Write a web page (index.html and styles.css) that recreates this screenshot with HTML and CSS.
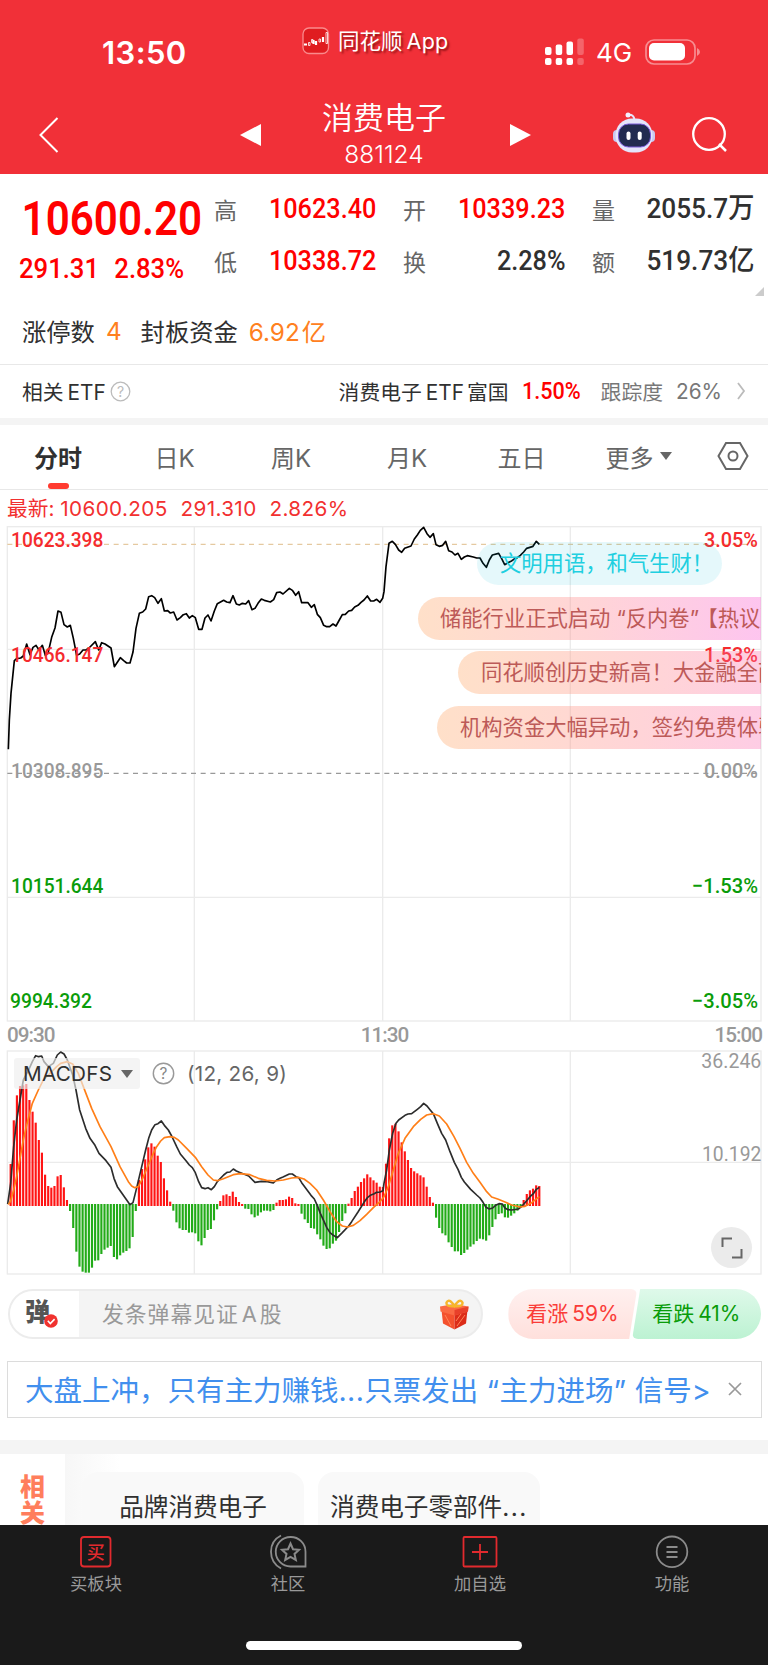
FILE: index.html
```html
<!DOCTYPE html>
<html lang="zh-CN">
  <head>
    <meta charset="UTF-8" />
    <meta name="viewport" content="width=device-width, initial-scale=1.0" />
    <title>消费电子 881124</title>
    <link rel="stylesheet" href="styles.css">
  </head>
  <body>
    <header class="header">
      <div class="status">
        <span class="time">13:50</span>
        <div class="app">
          <svg width="28" height="28" viewBox="0 0 28 28">
            <rect x="1" y="1" width="25.5" height="25.5" rx="6" fill="#e01c20" stroke="#fa8a8c" stroke-width="1.3" />
            <path d="M2 17.500h3M11.500 13v4M14 14v4M21 10v5" stroke="#fff" stroke-width="2.200" fill="none" />
            <path d="M6.500 15.500h1.500v3H6.500zM9.500 12.500h1.500v3H9.500zM17 12h1.500v3H17zM24 5.500h1.500v11H24z" stroke="#fff" stroke-width=".8" fill="none" />
          </svg>
          <span>同花顺<i>App</i></span>
        </div>
        <svg class="signal" width="40" height="28" viewBox="0 0 40 28" fill="#fff">
          <rect x="0" y="9" width="6.500" height="8" rx="2" />
          <rect x="10.700" y="6.500" width="6.500" height="10.500" rx="2" />
          <rect x="21.500" y="3.500" width="6.500" height="13.500" rx="2" />
          <rect x="32.300" y="0.500" width="6.500" height="16.500" rx="2" opacity=".25" />
          <rect x="0" y="20" width="6.500" height="7" rx="2" />
          <rect x="10.700" y="20" width="6.500" height="7" rx="2" />
          <rect x="21.500" y="20" width="6.500" height="7" rx="2" />
          <rect x="32.300" y="20" width="6.500" height="7" rx="2" opacity=".25" />
        </svg>
        <span class="net">4G</span>
        <svg class="battery" width="56" height="26" viewBox="0 0 56 26">
          <rect x="1" y="1" width="49" height="24" rx="8" fill="none" stroke="#fff" stroke-opacity=".45" stroke-width="1.700" />
          <rect x="4" y="4" width="36" height="17.500" rx="5" fill="#fff" />
          <path d="M52 9q3 1.500 3 4t-3 4z" fill="#fff" opacity=".45" />
        </svg>
      </div>
      <div class="nav">
        <svg class="back" width="20" height="38" viewBox="0 0 20 38"><path d="M18.500 2L1.500 19l17 17" fill="none" stroke="#fff" stroke-width="2" /></svg>
        <svg class="prev" width="21" height="22" viewBox="0 0 21 22"><path d="M0 11L21 0v22z" fill="#fff" /></svg>
        <div class="title">
          <h1>消费电子</h1>
          <p>881124</p>
        </div>
        <svg class="next" width="21" height="22" viewBox="0 0 21 22"><path d="M21 11L0 0v22z" fill="#fff" /></svg>
        <svg class="robot" width="44" height="42" viewBox="0 0 44 42">
          <path d="M16 4q6-1 6.500 5" fill="none" stroke="#e6e4fb" stroke-width="2" />
          <circle cx="16" cy="4" r="2.500" fill="#f3f0ff" />
          <rect x="1" y="19" width="10" height="12" rx="4" fill="#c9c8f0" />
          <rect x="33" y="19" width="10" height="12" rx="4" fill="#c9c8f0" />
          <rect x="3.500" y="7.500" width="37" height="34" rx="16.500" fill="#e4e5fb" />
          <rect x="6.500" y="13" width="32" height="23" rx="10" fill="#222b50" stroke="#7a5ad8" stroke-width="1" />
          <rect x="14.500" y="20.500" width="4" height="8.500" rx="2" fill="#fff" />
          <rect x="25.700" y="20.500" width="4" height="8.500" rx="2" fill="#fff" />
        </svg>
        <svg class="search" width="38" height="38" viewBox="0 0 38 38"><circle cx="18" cy="18" r="15.800" fill="none" stroke="#fff" stroke-width="2.300" /><path d="M28 28l7 7" stroke="#fff" stroke-width="2.500" /></svg>
      </div>
    </header>

    <section class="quote">
      <div class="price">
        <strong>10600.20</strong>
        <p><b>291.31</b><b>2.83%</b></p>
      </div>
      <dl class="stats">
        <div><dt>高</dt><dd class="up">10623.40</dd></div>
        <div><dt>开</dt><dd class="up">10339.23</dd></div>
        <div><dt>量</dt><dd class="amount">2055.7万</dd></div>
        <div><dt>低</dt><dd class="up">10338.72</dd></div>
        <div><dt>换</dt><dd>2.28%</dd></div>
        <div><dt>额</dt><dd class="amount">519.73亿</dd></div>
      </dl>
      <i class="corner"></i>
    </section>

    <section class="limit">
      <span>涨停数</span><em>4</em><span>封板资金</span><em>6.92<i>亿</i></em>
    </section>

    <section class="etf">
      <span>相关<i>ETF</i></span>
      <svg class="help" width="21" height="21" viewBox="0 0 21 21"><circle cx="10.500" cy="10.500" r="9.300" fill="none" stroke="#bbb" stroke-width="1.300" /><text x="10.500" y="15.500" text-anchor="middle">?</text></svg>
      <span class="etf-name">消费电子<i>ETF</i>富国</span>
      <b>1.50%</b>
      <span class="track">跟踪度</span>
      <span class="rate">26%</span>
      <svg width="10" height="20" viewBox="0 0 10 20"><path d="M2 2l6 8-6 8" fill="none" stroke="#bbb" stroke-width="1.800" /></svg>
    </section>

    <nav class="tabs">
      <a class="active">分时</a>
      <a>日K</a>
      <a>周K</a>
      <a>月K</a>
      <a>五日</a>
      <a>更多<i class="caret"></i></a>
      <a>
        <svg width="32" height="30" viewBox="0 0 32 30" fill="none" stroke="#666" stroke-width="2"><path d="M9 2h14l7.500 13L23 28H9L1.500 15z" /><circle cx="16" cy="15" r="4.500" /></svg>
      </a>
    </nav>

    <p class="latest"><span>最新:</span><span>10600.205</span><span>291.310</span><span>2.826%</span></p>

    <section class="chart">
      <svg class="plot" width="768" height="496" viewBox="0 318 2304 1488">
        <g class="grid">
          <rect x="22" y="320" width="2261" height="1483" />
          <path d="M583 320v1483M1148 320v1483M1711 320v1483M22 688h2261M22 1432h2261" />
        </g>
        <path class="dash-high" d="M22 373H2283" />
        <path class="dash-zero" d="M22 1060H2283" />
        <polyline class="price-line" points="25,988 28,900 33,820 43,722 50,716 62,714 70,708 80,672 90,704 99,682 108,676 117,690 127,676 136,706 144,700 155,652 165,624 174,573 183,577 192,614 202,621 211,616 220,655 230,706 239,702 249,690 258,690 267,684 286,665 296,690 305,668 315,672 333,684 343,740 361,713 371,722 380,729 390,729 399,696 408,625 418,580 428,576 437,567 446,530 455,527 464,533 474,550 484,536 493,573 503,572 511,579 521,576 531,600 541,593 550,584 559,581 568,594 577,587 586,593 596,628 606,628 615,594 624,585 633,603 643,573 652,551 671,541 680,546 690,548 699,527 709,552 718,555 727,550 737,552 746,542 756,569 765,565 774,550 784,537 793,541 811,546 821,539 830,518 840,516 849,522 868,505 877,511 887,526 896,515 905,548 924,548 934,562 943,554 952,583 961,593 971,616 980,620 989,620 999,612 1008,618 1018,600 1027,584 1036,583 1046,573 1055,571 1064,561 1074,556 1083,547 1092,540 1102,528 1112,543 1121,543 1130,538 1140,547 1148,535 1152,515 1158,440 1167,370 1177,364 1186,373 1196,390 1205,397 1214,385 1233,378 1243,357 1252,345 1261,331 1271,322 1281,341 1290,352 1300,341 1308,374 1318,379 1328,376 1337,364 1346,392 1356,396 1365,405 1374,400 1384,418 1393,411 1402,407 1420,411 1430,414 1440,414 1449,430 1459,442 1468,420 1477,405 1496,400 1505,416 1514,434 1524,428 1533,424 1543,417 1552,413 1561,406 1571,396 1580,385 1599,379 1609,364 1618,373" />
        <g class="scale">
          <text class="rise" x="33" y="380" textLength="277" lengthAdjust="spacingAndGlyphs">10623.398</text>
          <text class="rise" x="33" y="726" textLength="277" lengthAdjust="spacingAndGlyphs">10466.147</text>
          <text x="33" y="1073" textLength="277" lengthAdjust="spacingAndGlyphs">10308.895</text>
          <text class="fall" x="33" y="1419" textLength="277" lengthAdjust="spacingAndGlyphs">10151.644</text>
          <text class="fall" x="30" y="1765" textLength="246" lengthAdjust="spacingAndGlyphs">9994.392</text>
          <text class="rise" x="2112" y="380" textLength="162" lengthAdjust="spacingAndGlyphs">3.05%</text>
          <text class="rise" x="2112" y="726" textLength="162" lengthAdjust="spacingAndGlyphs">1.53%</text>
          <text x="2112" y="1073" textLength="162" lengthAdjust="spacingAndGlyphs">0.00%</text>
          <text class="fall" x="2076" y="1419" textLength="198" lengthAdjust="spacingAndGlyphs">−1.53%</text>
          <text class="fall" x="2076" y="1765" textLength="198" lengthAdjust="spacingAndGlyphs">−3.05%</text>
        </g>
      </svg>
      <div class="barrage">
        <p class="notice">文明用语，和气生财！</p>
        <p class="hot first">储能行业正式启动<i> “</i>反内卷<i class="close">”</i>【热议】</p>
        <p class="hot second">同花顺创历史新高！大金融全面爆发</p>
        <p class="hot third">机构资金大幅异动，签约免费体验</p>
      </div>
    </section>

    <div class="times"><span>09:30</span><span>11:30</span><span>15:00</span></div>

    <section class="macd">
      <svg class="plot" width="768" height="225" viewBox="0 150 2304 675">
        <g class="grid">
          <rect x="22" y="153" width="2261" height="669" />
          <path d="M583 153v669M1148 153v669M1711 153v669M22 487h2261" />
        </g>
        <g id="bars"></g>
        <polyline class="dif" points="23,612 32,550 41,440 50,360 60,300 70,240 88,205 97,185 107,167 116,170 125,168 132,185 145,200 160,190 172,165 182,156 192,162 202,180 218,225 228,270 239,330 257,385 270,415 285,436 297,460 318,482 333,502 342,535 352,560 370,586 390,614 399,608 408,572 418,530 428,488 437,450 446,415 455,390 465,374 474,371 484,363 493,376 505,390 515,408 530,440 541,462 558,482 568,495 577,503 586,518 596,545 605,563 615,566 624,563 634,569 643,560 652,545 671,525 681,517 690,516 700,507 709,513 718,517 746,528 765,547 784,544 802,545 820,549 830,540 840,535 849,531 868,522 877,522 888,530 896,533 905,548 933,586 943,597 952,617 961,640 971,662 980,682 990,698 1000,706 1012,713 1027,698 1046,678 1055,665 1074,636 1092,607 1102,593 1111,586 1121,582 1130,577 1140,576 1149,572 1152,550 1160,510 1168,450 1178,400 1188,370 1196,360 1215,346 1224,342 1235,341 1252,328 1262,320 1271,310 1281,318 1290,329 1300,341 1312,370 1325,400 1337,420 1350,455 1363,487 1374,508 1384,532 1393,546 1412,568 1430,585 1440,594 1449,607 1458,622 1468,627 1478,624 1487,616 1497,611 1507,612 1515,624 1524,629 1535,630 1555,627 1566,618 1575,608 1590,590 1601,580 1609,568 1618,562" />
        <polyline class="dea" points="25,614 32,603 41,570 50,530 60,475 70,420 80,375 97,310 115,270 130,240 150,220 170,200 182,190 202,185 218,192 235,220 250,260 275,325 300,380 333,440 360,500 385,545 395,558 404,563 415,560 428,535 445,495 460,460 470,440 482,423 493,413 510,410 523,412 535,420 560,445 586,472 605,500 624,525 640,540 652,542 670,536 700,524 720,521 750,524 775,535 800,541 825,543 850,540 875,534 895,532 912,537 930,550 950,570 970,600 990,635 1010,665 1027,678 1042,681 1060,676 1080,662 1100,643 1120,623 1140,605 1152,590 1165,560 1180,510 1195,460 1215,415 1240,380 1262,358 1280,345 1300,341 1318,348 1340,372 1362,410 1380,445 1400,487 1420,520 1440,547 1460,575 1475,591 1495,598 1515,606 1535,615 1560,621 1575,619 1595,608 1618,590" />
        <g class="scale light">
          <text x="2104" y="205" textLength="180" lengthAdjust="spacingAndGlyphs">36.246</text>
          <text x="2106" y="483" textLength="178" lengthAdjust="spacingAndGlyphs">10.192</text>
        </g>
      </svg>
      <div class="indicator">
        <span class="tag">MACDFS<i class="caret"></i></span>
        <svg class="help dark" width="23" height="23" viewBox="0 0 21 21"><circle cx="10.500" cy="10.500" r="9.300" fill="none" stroke="#999" stroke-width="1.300" /><text x="10.500" y="15.500" text-anchor="middle">?</text></svg>
        <span>(12, 26, 9)</span>
      </div>
      <div class="expand">
        <svg width="22" height="22" viewBox="0 0 22 22"><path d="M1.500 10V1.500H11M20.500 12v8.500H11" fill="none" stroke="#666" stroke-width="2" /></svg>
      </div>
    </section>

    <section class="comment">
      <div class="input">
        <div class="dan">
          弹
          <svg width="14" height="14" viewBox="0 0 14 14"><circle cx="7" cy="7" r="6.800" fill="#f0322f" /><path d="M3.800 6.800l2.500 2.700 4.300-4.400" fill="none" stroke="#fff" stroke-width="1.600" /></svg>
        </div>
        <span class="placeholder">发条弹幕见证<i>A</i>股</span>
        <svg class="gift" width="31" height="32" viewBox="0 0 31 32">
          <path d="M2.500 12L15.500 16v15.500L4 25.500z" fill="#f4512e" />
          <path d="M28.500 12L15.500 16v15.500L27 25.500z" fill="#dc2c18" />
          <path d="M1 8.500L15 6l14.500 2.500-.5 5-13.500 4-14-4z" fill="#fa6a44" />
          <path d="M15.500 12l14-3.500-.5 5-13.500 4z" fill="#e8402a" />
          <path d="M6 17l6 11M18 28l8-11M17 23l5-7" stroke="#ff8458" stroke-width="1" />
          <path d="M15.500 8Q7 9 7.500 4.500q2.500-5 8 3.500 5.500-8.500 8-3.500.5 4.500-8 3.500z" fill="none" stroke="#f7b62c" stroke-width="2.400" />
        </svg>
      </div>
      <div class="vote bull">看涨<i>59%</i></div>
      <div class="vote bear">看跌<i>41%</i></div>
    </section>

    <section class="ad">
      <span>大盘上冲，只有主力赚钱<i>...</i>只票发出<i> “</i>主力进场<i>” </i>信号<i>&gt;</i></span>
      <svg width="14" height="14" viewBox="0 0 14 14"><path d="M1 1l12 12M13 1L1 13" stroke="#999" stroke-width="1.700" /></svg>
    </section>

    <section class="related">
      <h2>相关</h2>
      <div class="cards">
        <a>品牌消费电子</a>
        <a>消费电子零部件<i>...</i></a>
      </div>
    </section>

    <footer class="bottom">
      <div class="menu">
        <a>
          <svg width="38" height="36" viewBox="0 0 38 36"><rect x="4" y="3" width="29.500" height="29.500" rx="3" fill="none" stroke="#e22a2e" stroke-width="1.800" /><text x="18.800" y="24.500" text-anchor="middle" class="buy">买</text></svg>
          买板块
        </a>
        <a>
          <svg width="38" height="36" viewBox="0 0 38 36" fill="none" stroke="#8b8b8b" stroke-width="1.800"><path d="M21.500 3A14.700 14.700 0 1 0 21.500 32.500H36.500V17.700A14.700 14.700 0 0 0 21.500 3z" /><path d="M12 1.500Q2 6.500 2 17.700T12 34.500" /><path d="M21.500 9.500l2.500 5.700 6 .6-4.500 4.100 1.300 6-5.300-3.100-5.300 3.100 1.300-6-4.500-4.100 6-.6z" stroke-width="2" /></svg>
          社区
        </a>
        <a>
          <svg width="38" height="36" viewBox="0 0 38 36" fill="none" stroke="#e22a2e" stroke-width="1.800"><rect x="2.500" y="3" width="33" height="29.500" rx="1" /><path d="M19 10v16M11 18h16" /></svg>
          加自选
        </a>
        <a>
          <svg width="38" height="36" viewBox="0 0 38 36" fill="none" stroke="#8b8b8b" stroke-width="1.800"><circle cx="19" cy="17.800" r="15.300" /><path d="M13.500 13h11M13.500 18h11M13.500 23h11" /></svg>
          功能
        </a>
      </div>
      <div class="home"></div>
    </footer>

    <script>
      // MACD histogram, one value per minute
      const values = [
        492, 361, 286, 258, 256, 252, 300, 335, 368, 420, 458, 524, 558, 563, 558, 529, 525, 562, 600, 633,
        684, 755, 800, 815, 818, 818, 803, 782, 781, 762, 749, 743, 738, 771, 778, 766, 758, 753, 745, 711,
        633, 540, 507, 478, 442, 430, 440, 467, 486, 535, 571, 605, 632, 667, 685, 690, 690, 698, 697, 700,
        724, 736, 714, 690, 687, 661, 628, 603, 586, 583, 588, 575, 591, 606, 612, 626, 627, 643, 652, 647,
        637, 632, 632, 634, 630, 608, 600, 600, 598, 590, 594, 610, 612, 641, 658, 669, 684, 686, 703, 718,
        737, 747, 745, 731, 722, 696, 663, 640, 611, 594, 573, 560, 546, 535, 523, 532, 541, 548, 560, 561,
        491, 415, 376, 371, 394, 427, 454, 480, 504, 514, 520, 526, 532, 560, 591, 608, 653, 684, 700, 706,
        727, 741, 754, 754, 765, 759, 749, 740, 733, 723, 716, 718, 722, 706, 681, 658, 642, 640, 652, 653,
        647, 640, 632, 622, 600, 582, 571, 566, 556, 558,
      ];
      const bars = document.getElementById("bars");

      values.forEach(function (value, i) {
        const line = document.createElementNS("http://www.w3.org/2000/svg", "line");
        const x = 32 + i * 9.384;
        const up = value < 615;
        line.setAttribute("x1", x);
        line.setAttribute("x2", x);
        line.setAttribute("y1", up ? 618 : 612);
        line.setAttribute("y2", value);
        line.setAttribute("class", up ? "bar-up" : "bar-down");
        bars.appendChild(line);
      });
    </script>
  </body>
</html>
```
FILE: styles.css
```css
* {
  box-sizing: border-box;
}

body {
  margin: 0;
  width: 768px;
  height: 1665px;
  overflow: hidden;
  background: #fff;
  color: #303030;
  font-family: Inter, "Noto Sans CJK SC", sans-serif;
}

h1,
h2,
p,
dl,
dd {
  margin: 0;
  font-weight: 400;
}

i,
em {
  font-style: normal;
}

svg {
  display: block;
  flex: none;
}

/* header */
.header {
  height: 174px;
  background: #f13038;
  color: #fff;
}

.status {
  display: flex;
  align-items: flex-start;
  height: 88px;
  padding-left: 102px;
  white-space: nowrap;
}

.time {
  width: 200px;
  margin-top: 34px;
  font-size: 31px;
  line-height: 38px;
  letter-spacing: 0.4px;
  font-weight: 600;
}

.app {
  display: flex;
  gap: 8px;
  width: 243px;
  margin-top: 27px;
  font-size: 21.5px;
  line-height: 29px;
  text-shadow: 2px 2px 2px rgba(90, 0, 0, 0.6);
}

.app i {
  margin-left: 4px;
  letter-spacing: 0.3px;
}

.signal {
  margin-top: 38px;
}

.net {
  width: 49px;
  margin: 37px 0 0 11px;
  font-size: 26px;
  line-height: 32px;
}

.battery {
  margin-top: 39px;
}

.nav {
  display: flex;
  align-items: center;
  height: 86px;
  padding: 7px 0 0 39px;
}

.prev {
  margin-left: 181px;
}

.title {
  width: 249px;
  padding-right: 3px;
  text-align: center;
}

.title h1 {
  font-size: 31px;
  line-height: 40px;
  font-weight: 350;
}

.title p {
  margin-top: 1px;
  font-size: 24.5px;
  line-height: 30px;
  font-weight: 300;
}

.title p,
.title h1 {
  position: relative;
  top: -1px;
}

.robot {
  margin: -5px 0 0 81px;
}

.search {
  margin-left: 35px;
}

/* quote */
.quote {
  position: relative;
  display: flex;
  height: 126px;
  color: #303030;
}

.price {
  width: 214px;
  padding: 18px 0 0 19px;
  color: #f00;
  font-family: Roboto, sans-serif;
}

.price strong {
  display: block;
  width: 210px;
  padding-left: 3px;
  font-size: 49px;
  line-height: 54px;
  font-weight: 600;
  transform: scaleX(0.86);
  transform-origin: left;
}

.price p {
  display: flex;
  gap: 17px;
  width: 220px;
  margin-top: 6px;
  font-size: 28.5px;
  line-height: 34px;
  transform: scaleX(0.9);
  transform-origin: left;
}

.price b {
  font-weight: 500;
}

.stats {
  display: grid;
  grid-template-columns: repeat(3, 162px);
  grid-auto-rows: 52px;
  column-gap: 27px;
  padding-top: 9px;
}

.stats div {
  display: flex;
  align-items: center;
  justify-content: space-between;
}

.stats dt {
  font-size: 23px;
  color: #666;
}

.stats dd {
  font-family: Roboto, "Noto Sans CJK SC", sans-serif;
  font-size: 28.5px;
  line-height: 34px;
  font-weight: 500;
  white-space: nowrap;
  transform: scaleX(0.885);
  transform-origin: right;
}

.stats .amount {
  transform: scaleX(0.92);
}

.stats .up {
  color: #f00;
}

.corner {
  position: absolute;
  right: 4px;
  bottom: 4px;
  border-bottom: 9px solid #ccc;
  border-left: 9px solid transparent;
}

.limit {
  display: flex;
  align-items: center;
  height: 64px;
  padding: 0 0 3px 22px;
  font-size: 24.3px;
}

.limit em {
  margin: 0 19px 0 11px;
  color: #ff8020;
}

.limit em i {
  margin-left: 2px;
}

.etf {
  display: flex;
  align-items: center;
  height: 61px;
  padding: 0 22px 1px;
  border-top: 1px solid #e8e8e8;
  border-bottom: 7px solid #f4f4f4;
  font-size: 20.8px;
  white-space: nowrap;
}

.etf i {
  margin: 0 4px 0 4px;
}

.help text {
  font-size: 14px;
  fill: #bbb;
}

.help.dark text {
  fill: #888;
}

.etf-name {
  margin-left: auto;
}

.etf-name i {
  margin-right: 3px;
}

.etf b {
  width: 58px;
  margin: 0 21px 0 13px;
  font: 500 23px Roboto, sans-serif;
  color: #f00;
  transform: scaleX(0.94);
  transform-origin: left;
}

.etf .track,
.etf .rate {
  color: #777;
}

.etf .track {
  margin-right: 13px;
}

.etf .rate {
  margin-right: 14px;
}

/* tabs */
.tabs {
  display: grid;
  grid-template-columns: 116px 117px 116px 116px 113px 121px 67px;
  height: 65px;
  border-bottom: 1px solid #e8e8e8;
  font-size: 24px;
  color: #666;
}

.tabs a {
  position: relative;
  display: flex;
  align-items: center;
  justify-content: center;
  padding-bottom: 2px;
}

.tabs .active {
  font-weight: 600;
  color: #303030;
}

.tabs .active::after {
  content: "";
  position: absolute;
  left: 48px;
  bottom: 0;
  width: 21px;
  height: 6px;
  border-radius: 3px;
  background: #ff3b30;
}

.caret {
  margin-left: 6px;
  border-top: 8px solid #666;
  border-left: 6px solid transparent;
  border-right: 6px solid transparent;
}

.latest {
  display: flex;
  height: 36px;
  padding-left: 7px;
  font-size: 20.7px;
  line-height: 37px;
  letter-spacing: 0.35px;
  color: #f23030;
}

.latest span {
  margin-right: 13px;
}

.latest span:first-child {
  margin-right: 6px;
  letter-spacing: 0;
}

/* charts */
.chart {
  position: relative;
}

.grid {
  fill: none;
  stroke: #ebebeb;
  stroke-width: 4;
}

.dash-high,
.dash-zero {
  stroke: #e5c9a0;
  stroke-width: 4;
  stroke-dasharray: 15 14;
}

.dash-zero {
  stroke: #999;
}

.price-line,
.dif,
.dea {
  fill: none;
  stroke: #000;
  stroke-width: 5;
  stroke-linejoin: round;
}

.dif {
  stroke: #2c2c2c;
}

.dea {
  stroke: #ff7f18;
}

.bar-up {
  stroke: #ff1414;
  stroke-width: 6.5;
}

.bar-down {
  stroke: #22ab18;
  stroke-width: 6.5;
}

.scale {
  font-family: Roboto, sans-serif;
  font-size: 63px;
  font-weight: 500;
  fill: #999;
}

.scale.light {
  font-weight: 400;
}

.scale .rise {
  fill: #f52b2e;
}

.scale .fall {
  fill: #0a9c0a;
}

.barrage {
  position: absolute;
  top: 0;
  left: 0;
  width: 761px;
  height: 100%;
  padding-top: 16px;
  overflow: hidden;
}

.barrage p {
  width: 450px;
  height: 43px;
  margin-bottom: 11.5px;
  padding-left: 23px;
  border-radius: 22px;
  font-size: 21.3px;
  line-height: 43px;
  white-space: nowrap;
}

.barrage .notice {
  width: 245px;
  margin-left: 477px;
  padding-left: 23px;
  background: rgba(0, 190, 215, 0.1);
  color: #20cfe0;
}

.hot {
  background: linear-gradient(90deg, rgba(255, 186, 135, 0.45), rgba(255, 125, 135, 0.33) 45%, rgba(250, 80, 180, 0.3) 80%);
  color: #bd5a58;
}

.hot i {
  white-space: pre;
}

.hot .close {
  margin-right: 8px;
}

.barrage .first {
  margin-left: 418px;
  padding-left: 22px;
  background: linear-gradient(90deg, rgba(255, 186, 135, 0.45), rgba(255, 125, 135, 0.33) 40%, rgba(250, 80, 205, 0.33) 75%);
}

.second {
  margin-left: 458px;
}

.third {
  margin-left: 437px;
}

.times {
  display: flex;
  justify-content: space-between;
  height: 28px;
  padding: 0 6px 0 7px;
  font: 500 20.7px/27px Roboto, sans-serif;
  color: #999;
  letter-spacing: -1px;
}

.macd {
  position: relative;
  height: 225px;
}

.indicator {
  position: absolute;
  top: 8px;
  left: 14px;
  display: flex;
  align-items: center;
  gap: 12px;
  height: 31px;
  font-size: 20.7px;
  letter-spacing: 0.25px;
  color: #666;
}

.tag {
  display: flex;
  align-items: center;
  width: 126px;
  height: 31px;
  padding-left: 9px;
  border-radius: 3px;
  background: rgba(238, 238, 238, 0.65);
  color: #303030;
}

.tag .caret {
  margin-left: 9px;
}

.expand {
  position: absolute;
  right: 16px;
  bottom: 7px;
  display: flex;
  align-items: center;
  justify-content: center;
  width: 41px;
  height: 41px;
  border-radius: 50%;
  background: #ebebeb;
}

/* comment bar */
.comment {
  display: flex;
  margin: 14px 7px 0 8px;
  height: 50px;
}

.input {
  display: flex;
  align-items: center;
  width: 476px;
  margin-right: 25px;
  border: 2px solid #ececec;
  border-radius: 25px;
  background: #f4f4f4;
  overflow: hidden;
  color: #999;
  font-size: 21.8px;
  letter-spacing: 1px;
}

.input i {
  margin: 0 2px 0 3px;
}

.placeholder {
  padding-bottom: 3px;
}

.dan {
  position: relative;
  width: 69px;
  height: 46px;
  margin-right: 23px;
  padding-left: 15px;
  background: #fff;
  color: #555;
  font-size: 25px;
  line-height: 42px;
  font-weight: 900;
}

.dan svg {
  position: absolute;
  left: 34px;
  top: 23px;
}

.gift {
  margin: 0 11px 0 auto;
}

.vote {
  width: 129px;
  font-size: 21px;
  line-height: 49px;
  white-space: nowrap;
}

.vote i {
  margin-left: 4px;
}

.bull {
  padding-left: 18px;
  border-radius: 25px 6px 6px 25px;
  background: linear-gradient(#fff0ef, #ffe0dc);
  color: #fa3c38;
  clip-path: polygon(0 0, 100% 0, calc(100% - 8px) 100%, 0 100%);
}

.bear {
  margin-left: -5px;
  padding-left: 20px;
  border-radius: 6px 25px 25px 6px;
  background: linear-gradient(#dff9ea, #bcf2d2);
  color: #0a9c0a;
  clip-path: polygon(8px 0, 100% 0, 100% 100%, 0 100%);
}

.ad {
  display: flex;
  align-items: center;
  justify-content: space-between;
  height: 57px;
  margin: 22px 6px 0 7px;
  padding: 0 19px 2px 17px;
  border: 1px solid #dcdcdc;
  color: #418fee;
  font-size: 28.5px;
  white-space: nowrap;
}

.ad i {
  white-space: pre;
  letter-spacing: 0.35px;
}

/* related plates */
.related {
  display: flex;
  height: 85px;
  margin-top: 22px;
  border-top: 14px solid #f4f4f4;
  overflow: hidden;
}

.related h2 {
  width: 65px;
  padding: 20px 20px 0;
  font-size: 25px;
  line-height: 26px;
  font-weight: 900;
  color: #ff7e5c;
}

.cards {
  display: flex;
  flex: 1;
  gap: 14px;
  padding: 18px 0 0 17px;
  background: linear-gradient(90deg, #f7f7f7, #fff 55px);
}

.cards a {
  width: 222px;
  height: 90px;
  border-radius: 16px;
  background: #f9f9f9;
  font-size: 24.6px;
  line-height: 71px;
  text-align: center;
}

.cards i {
  letter-spacing: 1.5px;
}

/* bottom menu */
.bottom {
  height: 140px;
  padding-top: 9px;
  background: #1a1a1a;
  color: #999;
}

.menu {
  display: grid;
  grid-template-columns: repeat(4, 1fr);
  height: 107px;
}

.menu a {
  display: flex;
  flex-direction: column;
  align-items: center;
  font-size: 17.3px;
  line-height: 28px;
}

.buy {
  font-size: 18px;
  font-weight: 500;
  fill: #e22a2e;
}

.home {
  width: 276px;
  height: 9px;
  margin: 0 auto;
  border-radius: 5px;
  background: #fff;
}
```
